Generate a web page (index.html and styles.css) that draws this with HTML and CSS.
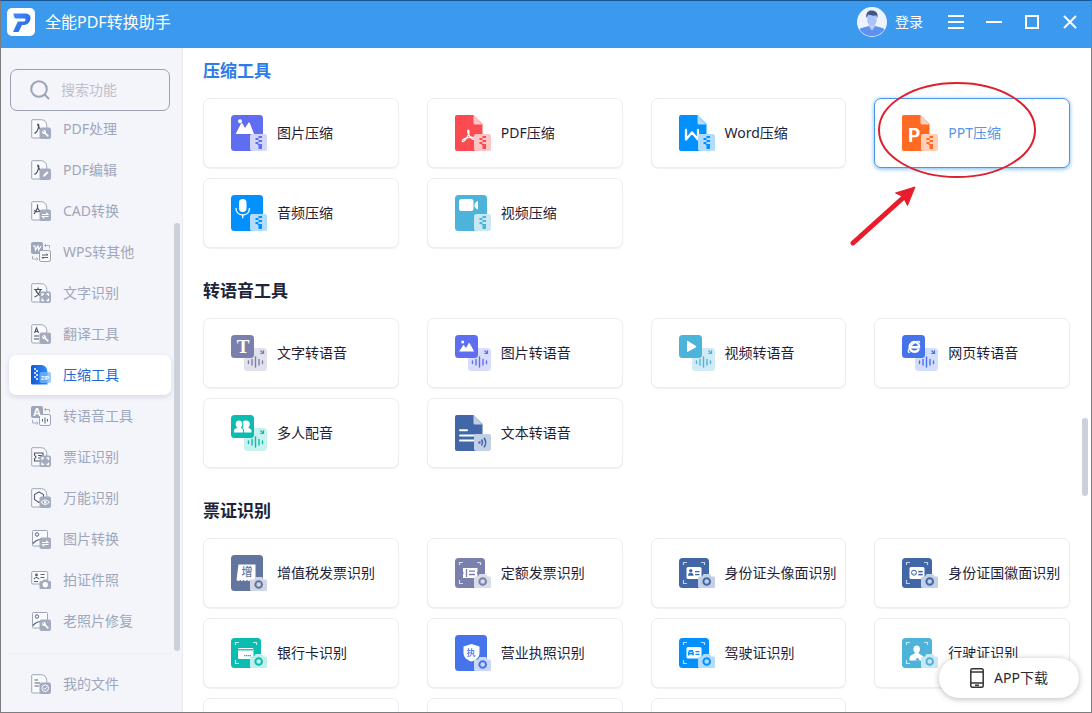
FILE: index.html
```html
<!DOCTYPE html>
<html lang="zh-CN">
<head>
<meta charset="utf-8">
<meta name="viewport" content="width=device-width, initial-scale=1">
<title>全能PDF转换助手</title>
<link rel="stylesheet" href="styles.css">
</head>
<body>
<svg class="defs" aria-hidden="true">
  <defs>
    <linearGradient id="zip-blue" x1="0" y1="0" x2="1" y2="0"><stop offset="0" stop-color="#1459d8"/><stop offset="1" stop-color="#2d8cf5"/></linearGradient>
    <linearGradient id="logo-blue" x1="0" y1="0" x2="1" y2="1"><stop offset="0" stop-color="#3f8cff"/><stop offset="1" stop-color="#2462e4"/></linearGradient>
  </defs>

  <!-- shared parts of the card icons -->
  <symbol id="p-block" viewBox="0 0 36 36"><rect width="32" height="36" rx="3.500" fill="var(--c)"/></symbol>
  <symbol id="p-file" viewBox="0 0 36 36"><path d="M2 0h16.500l9 9v27H2a2 2 0 0 1-2-2V2a2 2 0 0 1 2-2z" fill="var(--c)"/><path d="M18.500 0l9 9.500h-7.500a1.500 1.500 0 0 1-1.500-1.500z" fill="var(--l)"/></symbol>
  <symbol id="p-zip" viewBox="0 0 36 36"><rect x="19" y="19" width="17" height="17" rx="2" fill="var(--l)"/><path d="M27.500 21H31v2h-3.500zM24.500 23h3v2h-3zM27.500 25H31v2h-3.500zM24.500 27h3v2h-3zM27.500 30H31v4h-3.500zM26.500 29H31v1h-4.500z" fill="var(--c)"/></symbol>
  <symbol id="p-wave" viewBox="0 0 36 36"><rect x="13" y="13" width="23" height="23" rx="3.500" fill="var(--l)" fill-opacity=".85"/><path d="M17.500 26v2.500M21 24.500v5.500M24.500 22v10M28 24.500v5.500M31.500 26v2.500" stroke="var(--c)" stroke-width="1.400" stroke-linecap="round"/><path d="M29.500 15.500l2.500 2.500M32.500 15.300v3.200h-3.200" fill="none" stroke="var(--c)" stroke-width="1.200"/><rect width="23" height="23" rx="3.500" fill="var(--c)"/></symbol>
  <symbol id="p-camera" viewBox="0 0 36 36"><path d="M20.500 24.500h2.500l1.500-2.500h6.500l1.500 2.500h2a1.500 1.500 0 0 1 1.500 1.500v8.500a1.500 1.500 0 0 1-1.500 1.500h-14a1.500 1.500 0 0 1-1.500-1.500V26a1.500 1.500 0 0 1 1.500-1.500z" fill="var(--l)"/><circle cx="27.700" cy="29.500" r="3.300" fill="none" stroke="var(--c)" stroke-width="2"/></symbol>
  <symbol id="p-scan" viewBox="0 0 36 36"><rect y="3" width="30" height="30" rx="3.500" fill="var(--c)"/><path d="M4.500 10V7.500H8M22 7.500h3.500V10M4.500 25v3.500H8" fill="none" stroke="var(--l)" stroke-width="1.200"/></symbol>

  <!-- card icons -->
  <symbol id="i-img-zip" viewBox="0 0 36 36"><use href="#p-block"/><circle cx="9" cy="6.200" r="2" fill="#fff"/><path d="M4.700 19L10 8.500q.8-1.200 1.500 0l2.500 4.500 3.300-5q.8-1.300 1.500 0L23 19z" fill="#fff"/><use href="#p-zip"/></symbol>
  <symbol id="i-pdf-zip" viewBox="0 0 36 36"><use href="#p-file"/><path d="M13 15.200c1.600-.3 1.200 3-.3 5.800-1.500 3-4 6.300-5.200 5.500-1.300-1.500 3-3.500 6-4s6-.3 6.500 1-2.300 1-4-.8-4.500-7-3-7.500z" fill="none" stroke="#fff" stroke-width="1.300"/><use href="#p-zip"/></symbol>
  <symbol id="i-word-zip" viewBox="0 0 36 36"><use href="#p-file"/><path d="M7 15v9.500l6-7 6 7V15" fill="none" stroke="#fff" stroke-width="2.300" stroke-linejoin="round" stroke-linecap="round"/><use href="#p-zip"/></symbol>
  <symbol id="i-ppt-zip" viewBox="0 0 36 36"><use href="#p-file"/><use href="#p-zip"/></symbol>
  <symbol id="i-audio-zip" viewBox="0 0 36 36"><use href="#p-block"/><rect x="8" y="4" width="7.500" height="13" rx="3.700" fill="#fff"/><path d="M5 13c0 4.300 2.800 7 6.800 7s6.700-2.700 6.700-7M11.700 20v3.300" fill="none" stroke="#fff" stroke-width="1.400"/><use href="#p-zip"/></symbol>
  <symbol id="i-video-zip" viewBox="0 0 36 36"><use href="#p-block"/><rect x="4" y="4" width="14.500" height="12" rx="2.500" fill="#fff"/><path d="M19.500 9l2-2.500q1.500-1 1.500.5v6.500q0 1.500-1.500.5l-2-2.500z" fill="#fff"/><use href="#p-zip"/></symbol>

  <symbol id="i-img-voice" viewBox="0 0 36 36"><use href="#p-wave"/><circle cx="7.700" cy="7" r="1.500" fill="#fff"/><path d="M4 16.500l4-6q.6-.8 1.200 0L11 13l2.500-4.500q.6-1 1.300 0l4.400 8z" fill="#fff"/></symbol>
  <symbol id="i-video-voice" viewBox="0 0 36 36"><use href="#p-wave"/><path d="M8 6.500q0-1 1-.5l8 5q.8.6 0 1.200l-8 4.600q-1 .4-1-.6z" fill="#fff"/></symbol>
  <symbol id="i-web-voice" viewBox="0 0 36 36"><use href="#p-wave"/><path d="M16.800 14c-.8 1.800-2.300 2.800-4.300 2.800-2.900 0-4.800-2-4.800-4.700 0-2.900 2-5.100 4.800-5.100 2.900 0 4.700 2.300 4.500 5.300H8.500" fill="none" stroke="#fff" stroke-width="2.400"/><path d="M8 17c-3.300 1.800-1.800-3.800 2.500-7.500 4-3.500 8-4.500 7-1.500" fill="none" stroke="#fff" stroke-width="1.100"/></symbol>
  <symbol id="i-people" viewBox="0 0 36 36"><use href="#p-wave"/><path d="M8 5.500c2 0 3.300 1.300 3.300 3.500 0 1.500-.6 3-1.600 3.800 1 .8 2.300 1.200 2.300 2.700v2H3v-2c0-1.500 2.300-2 3.300-2.700C5.300 12 4.700 10.500 4.700 9c0-2.200 1.300-3.500 3.300-3.500zM15.500 5.500c2 0 3.300 1.300 3.300 3.500 0 1.500-.6 3-1.600 3.800 1 .7 3.300 1.200 3.300 2.700v2h-7.500v-2c0-1.300-.8-2-1.500-2.500.6-1 .9-2 .9-3.500s-.3-2.200-.7-2.700c.7-.8 1.700-1.300 3.800-1.300z" fill="#fff"/></symbol>
  <symbol id="i-doc-voice" viewBox="0 0 36 36"><use href="#p-file"/><path d="M5 15.200h7M5 20.500h15M5 25.500h15" stroke="#fff" stroke-width="2" stroke-linecap="round"/><rect x="19" y="19" width="17" height="17" rx="2" fill="var(--l)"/><circle cx="24.500" cy="27.500" r="1.200" fill="var(--c)"/><path d="M26.500 24.500q2 3 0 6M29 22.700q3.500 4.800 0 9.600" fill="none" stroke="var(--c)" stroke-width="1.500"/></symbol>

  <symbol id="i-vat" viewBox="0 0 36 36"><use href="#p-block"/><path d="M7.500 9.500h17v16.700l-1.700-1.200-1.700 1.200-1.700-1.200-1.700 1.200-1.700-1.200-1.700 1.200-1.700-1.200-1.700 1.200-1.700-1.200-1.700 1.200-2-1.200z" fill="#fff"/><use href="#p-camera"/></symbol>
  <symbol id="i-quota" viewBox="0 0 36 36"><use href="#p-scan"/><path d="M8 13h14.500v3.500q-1.500 1.500 0 3V23H8v-3.500q1.500-1.500 0-3z" fill="#fff"/><path d="M11.500 14v8M14 16.200h6M14 19.500h6" stroke="var(--c)" stroke-width="1.300"/><use href="#p-camera" y="-3"/></symbol>
  <symbol id="i-id-front" viewBox="0 0 36 36"><use href="#p-scan"/><rect x="7.500" y="12" width="15" height="12" rx="1.500" fill="#fff"/><circle cx="11.800" cy="15.700" r="1.700" fill="var(--c)"/><path d="M9 20.800q0-3 2.800-3t2.800 3zM16 16h4.500v1.200H16zM16 19h4.500v1.200H16z" fill="var(--c)"/><use href="#p-camera" y="-3"/></symbol>
  <symbol id="i-id-back" viewBox="0 0 36 36"><use href="#p-scan"/><rect x="7.500" y="12" width="15" height="12" rx="1.500" fill="#fff"/><circle cx="12" cy="17.700" r="2.500" fill="none" stroke="var(--c)"/><path d="M10 18.500h4M16.500 16h4v1.200h-4zM16.500 19h4v1.200h-4z" fill="var(--c)" stroke="var(--c)" stroke-width=".3"/><use href="#p-camera" y="-3"/></symbol>
  <symbol id="i-bank" viewBox="0 0 36 36"><use href="#p-scan"/><rect x="7" y="13" width="15.500" height="11" rx="1.300" fill="#fff"/><path d="M7 14.800h15.500" stroke="var(--c)" stroke-width="1.300"/><path d="M13 20.700h7" stroke="var(--c)" stroke-width="1.200" stroke-dasharray="1.300 .6"/><use href="#p-camera" y="-3"/></symbol>
  <symbol id="i-license" viewBox="0 0 36 36"><use href="#p-block"/><path d="M16.500 9l8 2.500V18c0 4.500-3.500 7-8 8.500-4.500-1.500-8-4-8-8.500v-6.500z" fill="#fff"/><use href="#p-camera"/></symbol>
  <symbol id="i-driver" viewBox="0 0 36 36"><use href="#p-scan"/><rect x="7.500" y="12" width="15" height="11.500" rx="1.500" fill="#fff"/><path d="M9 17.500l1-2.500h3.800l1 2.500v3h-1.300v-1h-3.200v1H9zM16.500 16h4v1.200h-4zM16.500 18.800h4V20h-4z" fill="var(--c)"/><path d="M10.300 17.300h3.200" stroke="#fff" stroke-width=".8"/><use href="#p-camera" y="-3"/></symbol>
  <symbol id="i-vehicle" viewBox="0 0 36 36"><use href="#p-scan"/><path d="M14.700 10.500c2 0 3.300 1.500 3.300 3.500 0 1.800-.7 3-1.500 3.700 0 1.800 5 1.800 5 5.300v2.500h-14V23c0-3.500 5.500-3.500 5.500-5.300-.9-.8-1.600-2-1.600-3.700 0-2 1.300-3.500 3.300-3.500z" fill="#fff"/><path d="M13 25.500l2.500-3 2.500 3" fill="var(--c)"/><use href="#p-camera" y="-3"/></symbol>

  <!-- sidebar icons -->
  <symbol id="s-file" viewBox="0 0 20 20"><path d="M1.500.7h9q5 .5 5.300 6V19H1.500q-.8 0-.8-.8V1.500q0-.8.800-.8z" fill="#fafbfd" stroke="#9da5b8" stroke-width="1"/></symbol>
  <symbol id="s-badge" viewBox="0 0 20 20"><rect x="8.500" y="8.500" width="11.500" height="11.500" rx="2" fill="#a3abbe"/></symbol>
  <symbol id="s-acro" viewBox="0 0 20 20"><path d="M6.500 5c2 0 1.500 2.500.5 5-1 2.700-2.500 4.300-3.700 4.200M6.500 5c.5 2 1.300 4 3 5" fill="none" stroke="#4c5366" stroke-width="1.200"/></symbol>
  <symbol id="s-wrench" viewBox="0 0 20 20"><circle cx="13" cy="13" r="1.900" fill="#fff"/><path d="M13.500 13.500l3.300 3.300" stroke="#fff" stroke-width="1.700" stroke-linecap="round"/><path d="M11 11l2 1.800" stroke="#a3abbe"/></symbol>
  <symbol id="s-swap" viewBox="0 0 20 20"><path d="M11 13.500h6l-1.800-1.800M17.500 15.500h-6l1.800 1.800" fill="none" stroke="#fff" stroke-width="1.100"/></symbol>
  <symbol id="s-focus" viewBox="0 0 20 20"><path d="M11 13v-2h2M15.500 11h2v2M17.500 15.500v2h-2M13 17.500h-2v-2" fill="none" stroke="#fff" stroke-width="1.300"/></symbol>
  <symbol id="s-pair" viewBox="0 0 20 20"><rect width="12" height="12" rx="2" fill="#9da5b8"/><path d="M13.500 3.500h5v3M15 2l-1.500 1.500L15 5M1.500 14v3H7M5.500 15.500L7 17l-1.500 1.500" fill="none" stroke="#a9b0c2" stroke-width="1"/><rect x="8.500" y="8.500" width="11" height="11" rx="1.500" fill="#f8f9fc" stroke="#9da5b8"/></symbol>
  <symbol id="s-photo" viewBox="0 0 20 20"><rect x="1.500" y="1.500" width="15" height="15.500" rx="1" fill="#fafbfd" stroke="#9da5b8"/><circle cx="6" cy="5.500" r="1.700" fill="none" stroke="#596075"/><path d="M2 14.500c3-3.500 5-4 8-4" fill="none" stroke="#596075" stroke-width="1.200"/></symbol>

  <symbol id="n-pdf" viewBox="0 0 20 20"><use href="#s-file"/><use href="#s-acro"/><use href="#s-badge"/><use href="#s-wrench"/></symbol>
  <symbol id="n-edit" viewBox="0 0 20 20"><use href="#s-file"/><use href="#s-acro"/><use href="#s-badge"/><path d="M12 16.700l.5-2 3.500-3.500 1.500 1.500-3.500 3.500z" fill="#fff"/></symbol>
  <symbol id="n-cad" viewBox="0 0 20 20"><use href="#s-file"/><path d="M6.500 3.500V7L3 13M6.500 7l3.500 5M3 9.500q3.500 2.500 7 0" fill="none" stroke="#4c5366" stroke-width="1.200"/><use href="#s-badge"/><use href="#s-swap"/></symbol>
  <symbol id="n-wps" viewBox="0 0 20 20"><use href="#s-pair"/><path d="M2 4h2l.5 4L7 4l.5 4L10 4" fill="none" stroke="#fff" stroke-width="1.200"/><path d="M11 13h6l-1.500-1.500M17 15.500h-6l1.500 1.500" fill="none" stroke="#596075"/></symbol>
  <symbol id="n-ocr" viewBox="0 0 20 20"><use href="#s-file"/><path d="M3 6.500h8M7 4.500v2M9.500 6.500Q8.500 12 3.500 14M4.500 6.500Q6 11 10 13" fill="none" stroke="#4c5366" stroke-width="1.200"/><use href="#s-badge"/><use href="#s-focus"/></symbol>
  <symbol id="n-trans" viewBox="0 0 20 20"><use href="#s-file"/><path d="M3.500 9L5.500 4l2 5M4.200 7.500h2.700M3 12h5M3 15h5" fill="none" stroke="#4c5366" stroke-width="1.100"/><use href="#s-badge"/><use href="#s-wrench"/></symbol>
  <symbol id="n-zip" viewBox="0 0 20 20"><path d="M1.500 0H11q5 1 5.500 7v12.500h-15Q0 19.500 0 18V1.500Q0 0 1.500 0z" fill="url(#zip-blue)"/><path d="M3 4h2M5 6h2M3 8h2M5 10h2M3 12h2M5 14h2" stroke="#fff" stroke-width="1.300"/><rect x="8.500" y="7" width="11.500" height="11" rx="2" fill="#75b7fb" fill-opacity=".75"/></symbol>
  <symbol id="n-ticket" viewBox="0 0 20 20"><use href="#s-file"/><path d="M3.500 6H12v8H3.500v-2l1.500-2-1.500-2zM7 8.500h4M7 11h4" fill="none" stroke="#4c5366" stroke-width="1.100"/><use href="#s-badge"/><use href="#s-focus"/></symbol>
  <symbol id="n-all" viewBox="0 0 20 20"><use href="#s-file"/><path d="M8 4l4.500 2.500v5L8 14.500l-4.500-3v-5z" fill="none" stroke="#596075" stroke-width="1.100"/><use href="#s-badge"/><path d="M10 14.200q4.200-4.500 8.400 0-4.200 4.500-8.400 0z" fill="none" stroke="#fff"/><circle cx="14.200" cy="14.200" r="1.200" fill="#fff"/></symbol>
  <symbol id="n-photo" viewBox="0 0 20 20"><use href="#s-photo"/><use href="#s-badge"/><use href="#s-swap"/></symbol>
  <symbol id="n-idphoto" viewBox="0 0 20 20"><rect x=".7" y="1.500" width="16" height="12.500" rx="1" fill="#fafbfd" stroke="#9da5b8"/><circle cx="5.500" cy="5" r="1.400" fill="#596075"/><path d="M3 9q2.500-3 5 0M9.500 4.500h4M9.500 7.500h4M3 11.500h4" fill="none" stroke="#596075" stroke-width="1.200"/><path d="M10 11h1.500l1-1.500h4l1 1.500H19q1 0 1 1v6q0 1-1 1h-9.500q-1 0-1-1v-6q0-1 1-1z" fill="#a3abbe"/><circle cx="14.300" cy="14.700" r="2.600" fill="#fff"/></symbol>
  <symbol id="n-repair" viewBox="0 0 20 20"><use href="#s-photo"/><use href="#s-badge"/><use href="#s-wrench"/></symbol>
  <symbol id="n-mine" viewBox="0 0 20 20"><use href="#s-file"/><path d="M3.500 6H7M3.500 9H9M3.500 12H8" stroke="#596075" stroke-width="1.200"/><use href="#s-badge"/><circle cx="14.200" cy="14.200" r="3.300" fill="none" stroke="#fff"/><path d="M12.700 14.200l1.200 1.200 2-2.300" fill="none" stroke="#fff"/></symbol>
</svg>

<div class="window">
  <header class="titlebar">
    <svg class="logo" viewBox="0 0 28 28" aria-hidden="true"><rect width="28" height="28" rx="5" fill="#fff"/><path d="M6.500 5.500H18c4.300 0 6.300 2.500 5.300 6.200-1 3.600-3.600 5.300-7 5.300H15l-3.500 7H6l4.800-10.500H16c1.500 0 2.300-.5 2.500-1.500.2-.9-.3-1.500-1.300-1.500H9.500c-2 0-3-1.500-3-5z" fill="url(#logo-blue)"/></svg>
    <h1 class="app-name">全能PDF转换助手</h1>
    <button class="login" type="button">
      <svg class="avatar" viewBox="0 0 30 30" aria-hidden="true"><circle cx="15" cy="15" r="15" fill="#eef4ff"/><path d="M2.500 22.500c2-2.500 6-2 9-3.500h7c3 1.500 7 1 9 3.500A15 15 0 0 1 2.500 22.500z" fill="#5d91f0"/><path d="M11.500 18.500l3.500 5 3.500-5-1-3h-5z" fill="#bdd3fb"/><path d="M10.300 8h9.400v5.500c0 3-2.200 5.300-4.700 5.300s-4.700-2.300-4.700-5.300z" fill="#a9c5f8"/><path d="M9.500 11c-1-5 1.500-7.500 5-7.500 4 0 7 2 5.800 7.500l-1-2.500c-3 .3-6 .2-8-1z" fill="#3d5687"/></svg>
      <span>登录</span>
    </button>
    <div class="caption-buttons">
      <button type="button" aria-label="菜单"><svg viewBox="0 0 16 16"><path d="M0 2h16M0 8h16M0 14h16" stroke-width="2"/></svg></button>
      <button type="button" aria-label="最小化"><svg viewBox="0 0 16 16"><path d="M0 8h16" stroke-width="2"/></svg></button>
      <button type="button" aria-label="最大化"><svg viewBox="0 0 16 16"><path d="M2 2h12v12H2z" stroke-width="2"/></svg></button>
      <button type="button" aria-label="关闭"><svg viewBox="0 0 16 16"><path d="M2 2l12 12M14 2L2 14" stroke-width="2"/></svg></button>
    </div>
  </header>

  <div class="body">
    <aside class="sidebar">
      <label class="search">
        <svg viewBox="0 0 20 20" aria-hidden="true"><circle cx="9" cy="9" r="7.800"/><path d="M14.500 14.500l4.500 4.500"/></svg>
        <input type="text" placeholder="搜索功能" aria-label="搜索功能">
      </label>
      <nav class="nav">
        <a class="nav-item" href="#"><svg><use href="#n-pdf"/></svg>PDF处理</a>
        <a class="nav-item" href="#"><svg><use href="#n-edit"/></svg>PDF编辑</a>
        <a class="nav-item" href="#"><svg><use href="#n-cad"/></svg>CAD转换</a>
        <a class="nav-item" href="#"><svg><use href="#n-wps"/></svg>WPS转其他</a>
        <a class="nav-item" href="#"><svg><use href="#n-ocr"/></svg>文字识别</a>
        <a class="nav-item" href="#"><svg><use href="#n-trans"/></svg>翻译工具</a>
        <a class="nav-item active" href="#" aria-current="page"><svg viewBox="0 0 20 20"><use href="#n-zip"/><text x="14" y="15" class="glyph-zip">ZIP</text></svg>压缩工具</a>
        <a class="nav-item" href="#"><svg viewBox="0 0 20 20"><use href="#s-pair"/><path d="M11.500 13v2.500M14 11.500v6M16.500 13v2.500" stroke="#596075"/><text x="6" y="10" class="glyph-a">A</text></svg>转语音工具</a>
        <a class="nav-item" href="#"><svg><use href="#n-ticket"/></svg>票证识别</a>
        <a class="nav-item" href="#"><svg><use href="#n-all"/></svg>万能识别</a>
        <a class="nav-item" href="#"><svg><use href="#n-photo"/></svg>图片转换</a>
        <a class="nav-item" href="#"><svg><use href="#n-idphoto"/></svg>拍证件照</a>
        <a class="nav-item" href="#"><svg><use href="#n-repair"/></svg>老照片修复</a>
      </nav>
      <div class="side-foot"><a class="nav-item" href="#"><svg><use href="#n-mine"/></svg>我的文件</a></div>
      <span class="side-thumb"></span>
    </aside>

    <main class="content">
      <section class="group">
        <h2 class="current">压缩工具</h2>
        <div class="cards">
          <a class="card indigo" href="#"><svg><use href="#i-img-zip"/></svg>图片压缩</a>
          <a class="card red" href="#"><svg><use href="#i-pdf-zip"/></svg>PDF压缩</a>
          <a class="card blue" href="#"><svg><use href="#i-word-zip"/></svg>Word压缩</a>
          <div class="marked">
            <a class="card orange hovered" href="#"><svg viewBox="0 0 36 36"><use href="#i-ppt-zip"/><text x="6" y="27" class="glyph-p">P</text></svg>PPT压缩</a>
            <svg class="mark" viewBox="0 0 190 166" aria-hidden="true"><ellipse cx="107" cy="48" rx="78" ry="47" fill="none" stroke="#de1f2d" stroke-width="2"/><path d="M3 161L54 115" fill="none" stroke="#e81c2a" stroke-width="5" stroke-linecap="round"/><path d="M65 105L45.500 111l7.500 3.500 4.500 9z" fill="#e81c2a" stroke="#e81c2a"/></svg>
          </div>
          <a class="card blue" href="#"><svg><use href="#i-audio-zip"/></svg>音频压缩</a>
          <a class="card sky" href="#"><svg><use href="#i-video-zip"/></svg>视频压缩</a>
        </div>
      </section>
      <section class="group">
        <h2>转语音工具</h2>
        <div class="cards">
          <a class="card mauve" href="#"><svg viewBox="0 0 36 36"><use href="#p-wave"/><text x="12" y="18" class="glyph-t">T</text></svg>文字转语音</a>
          <a class="card indigo" href="#"><svg><use href="#i-img-voice"/></svg>图片转语音</a>
          <a class="card sky" href="#"><svg><use href="#i-video-voice"/></svg>视频转语音</a>
          <a class="card royal" href="#"><svg><use href="#i-web-voice"/></svg>网页转语音</a>
          <a class="card teal" href="#"><svg><use href="#i-people"/></svg>多人配音</a>
          <a class="card navy" href="#"><svg><use href="#i-doc-voice"/></svg>文本转语音</a>
        </div>
      </section>
      <section class="group">
        <h2>票证识别</h2>
        <div class="cards">
          <a class="card slate" href="#"><svg viewBox="0 0 36 36"><use href="#i-vat"/><text x="16" y="21" class="glyph-han glyph-vat">增</text></svg>增值税发票识别</a>
          <a class="card mauve" href="#"><svg><use href="#i-quota"/></svg>定额发票识别</a>
          <a class="card navy" href="#"><svg><use href="#i-id-front"/></svg>身份证头像面识别</a>
          <a class="card navy" href="#"><svg><use href="#i-id-back"/></svg>身份证国徽面识别</a>
          <a class="card teal" href="#"><svg><use href="#i-bank"/></svg>银行卡识别</a>
          <a class="card royal" href="#"><svg viewBox="0 0 36 36"><use href="#i-license"/><text x="16" y="21" class="glyph-han glyph-lic">执</text></svg>营业执照识别</a>
          <a class="card blue" href="#"><svg><use href="#i-driver"/></svg>驾驶证识别</a>
          <a class="card sky" href="#"><svg><use href="#i-vehicle"/></svg>行驶证识别</a>
          <div class="card"></div>
          <div class="card"></div>
          <div class="card"></div>
        </div>
      </section>
    </main>
    <span class="main-thumb"></span>
    <button class="download" type="button"><svg viewBox="0 0 14 20" aria-hidden="true"><rect x=".8" y=".8" width="12.400" height="18.400" rx="1.500"/><path d="M1 4h12M1 15h12M5 17.300h4"/></svg>APP下载</button>
  </div>
</div>
</body>
</html>
```
FILE: styles.css
```css
* { box-sizing: border-box; }

body {
  margin: 0;
  font: 14px/20px "Noto Sans", "Noto Sans CJK SC", sans-serif;
  color: #1e1e38;
}

button, input { font: inherit; color: inherit; }
button { border: 0; padding: 0; background: none; cursor: pointer; }
a { color: inherit; text-decoration: none; }

.defs { position: absolute; width: 0; height: 0; }

.window {
  display: flex;
  flex-direction: column;
  height: 100vh;
  border: 1px solid #7d7d80;
  border-top-color: #155591;
  background: #fff;
  overflow: hidden;
}

/* Title bar */
.titlebar {
  display: flex;
  align-items: center;
  flex: none;
  height: 47px;
  padding: 0 2px 6px 6px;
  background: #3b99ee;
  color: #fff;
}
.logo { width: 28px; height: 28px; margin-right: 10px; }
.app-name { margin: 0; font-size: 16px; font-weight: 400; line-height: 24px; }
.login { display: flex; align-items: center; gap: 8px; margin-left: auto; margin-right: 14px; }
.avatar { width: 30px; height: 30px; }
.caption-buttons { display: flex; }
.caption-buttons button { display: flex; align-items: center; justify-content: center; width: 38px; height: 32px; }
.caption-buttons svg { width: 16px; height: 16px; fill: none; stroke: #fff; }

.body { position: relative; display: flex; flex: 1; min-height: 0; }

/* Sidebar */
.sidebar {
  position: relative;
  display: flex;
  flex-direction: column;
  flex: none;
  width: 182px;
  padding: 21px 11px 0 8px;
  background: #f4f5fa;
  border-right: 1px solid #eaebf1;
}
.search {
  display: flex;
  align-items: center;
  gap: 11px;
  flex: none;
  height: 42px;
  margin: 0 1px;
  padding: 0 10px 0 19px;
  border: 1px solid #9ba0b2;
  border-radius: 7px;
}
.search svg { flex: none; width: 20px; height: 20px; fill: none; stroke: #9ba3b6; stroke-width: 2; }
.search input { width: 100%; min-width: 0; padding: 0; border: 0; outline: 0; background: none; }
.search input::placeholder { color: #bfc0c8; opacity: 1; }

.nav { display: flex; flex-direction: column; gap: 1px; flex: 1; margin-top: -2px; min-height: 0; }
.nav-item {
  display: flex;
  align-items: center;
  gap: 12px;
  height: 40px;
  flex: none;
  padding-left: 22px;
  border-radius: 7px;
  color: #9ea7bb;
}
.nav-item svg { flex: none; width: 20px; height: 20px; }
.nav-item.active { background: #fff; color: #2468d8; box-shadow: 0 2px 5px rgba(60, 70, 110, .16); }
.side-foot { flex: none; height: 59px; padding-top: 10px; border-top: 1px solid #eeeff4; }
.side-thumb { position: absolute; right: 2px; top: 175px; width: 6px; height: 428px; border-radius: 3px; background: #ccd0db; }

/* Tool groups */
.content { flex: 1; min-width: 0; padding: 11px 21px 0 20px; overflow: hidden; }
.group { margin-bottom: 31px; }
.group h2 { margin: 0 0 15px; font-size: 17px; line-height: 24px; font-weight: 700; color: #20243a; }
.group h2.current { color: #2b7cea; }
.cards { display: grid; grid-template-columns: repeat(4, minmax(0, 1fr)); gap: 10px 28px; }
.card {
  display: flex;
  align-items: center;
  gap: 10px;
  height: 70px;
  padding-left: 27px;
  border: 1px solid #ededf0;
  border-radius: 7px;
  background: #fff;
  box-shadow: 0 1px 1px rgba(0, 0, 0, .06);
  white-space: nowrap;
}
.card svg { flex: none; width: 36px; height: 36px; }
.card.hovered { border-color: #4a97e6; color: #5596e6; box-shadow: 0 1px 4px rgba(59, 153, 238, .7); }

.indigo { --c: #5f6df0; --l: #d3d6fb; }
.red { --c: #fb4b51; --l: #fec5c7; }
.blue { --c: #0090ff; --l: #b2dcff; }
.orange { --c: #ff6b22; --l: #ffcfb9; }
.sky { --c: #4cb3da; --l: #c9e8f4; }
.mauve { --c: #7a80ad; --l: #dadce8; }
.royal { --c: #4473ec; --l: #cbd8fa; }
.teal { --c: #0bbcb0; --l: #bdf0ea; }
.navy { --c: #4167a8; --l: #c3cfe5; }
.slate { --c: #61759f; --l: #d0d6e4; }

.glyph-p { font: 700 19px Inter, sans-serif; fill: #fff; }
.glyph-t { font: 700 19px "Liberation Serif", serif; fill: #fff; text-anchor: middle; }
.glyph-a { font: 700 11px "Liberation Sans", sans-serif; fill: #fff; text-anchor: middle; }
.glyph-zip { font: 700 5px "Liberation Sans", sans-serif; fill: #fff; text-anchor: middle; }
.glyph-han { font-family: "Noto Sans CJK SC", sans-serif; font-weight: 500; fill: var(--c); text-anchor: middle; }
.glyph-vat { font-size: 11px; }
.glyph-lic { font-size: 9px; }

/* Hand-drawn callout over the highlighted card */
.marked { position: relative; }
.mark { position: absolute; left: -24px; top: -16px; width: 190px; height: 166px; pointer-events: none; }

.main-thumb { position: absolute; right: 3px; top: 370px; width: 6px; height: 78px; border-radius: 3px; background: #ccd0db; }
.download {
  position: absolute;
  right: 12px;
  bottom: 14px;
  display: flex;
  align-items: center;
  justify-content: center;
  gap: 10px;
  width: 140px;
  height: 40px;
  border-radius: 20px;
  background: #fff;
  box-shadow: 0 1px 6px rgba(0, 0, 0, .28);
  color: #2a2a35;
}
.download svg { width: 14px; height: 20px; fill: none; stroke: #333; stroke-width: 1.5; }
```
